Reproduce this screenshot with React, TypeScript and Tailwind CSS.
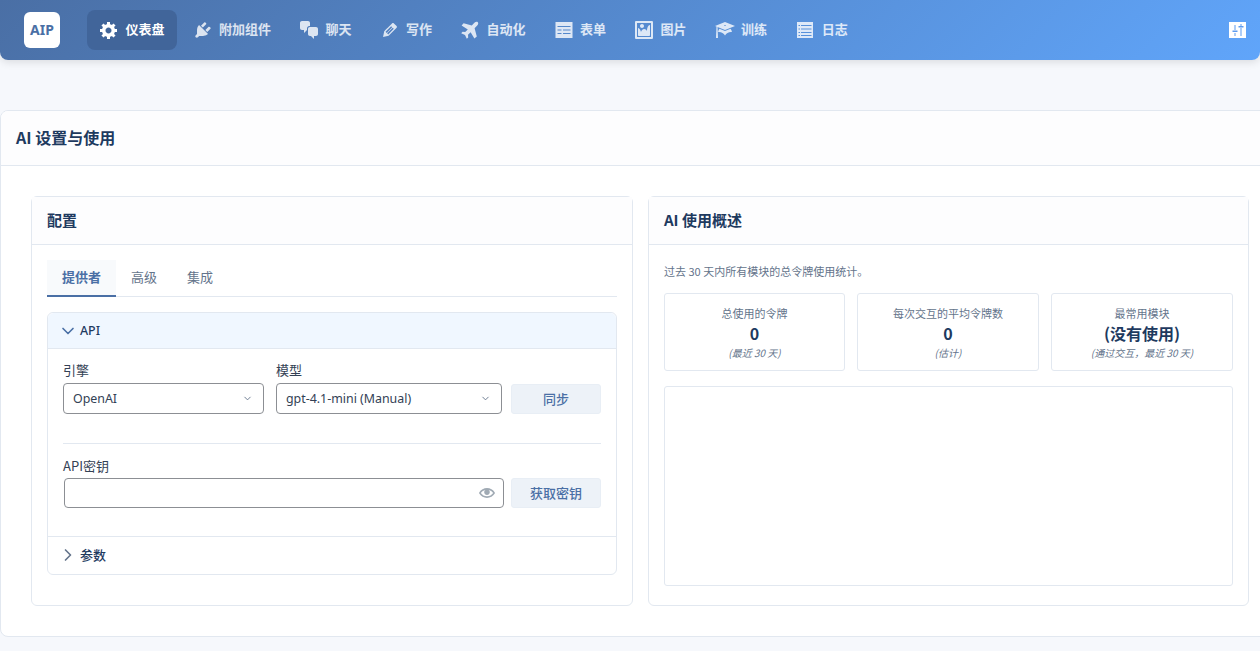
import React from 'react';
import { ChevronDown, ChevronRight } from 'lucide-react';

type IconProps = { className?: string };

const Dash = ({ d, className }: IconProps & { d: string }) => (
  <svg viewBox="0 0 20 20" className={className} fill="currentColor">
    <path d={d} />
  </svg>
);

const CogIcon = (p: IconProps) => (
  <Dash {...p} d="M18 12h-2.180c-.17.7-.44 1.350-.81 1.930l1.540 1.540-2.100 2.100-1.540-1.540c-.58.36-1.230.63-1.910.79V19H8v-2.180c-.68-.16-1.330-.43-1.910-.79l-1.540 1.540-2.120-2.120 1.540-1.540c-.36-.58-.63-1.230-.79-1.910H1V9.030h2.170c.16-.7.44-1.350.8-1.940L2.430 5.550l2.100-2.100 1.540 1.540c.58-.37 1.240-.64 1.930-.81V2h3v2.180c.68.16 1.330.43 1.910.79l1.540-1.540 2.120 2.120-1.540 1.540c.36.59.64 1.240.8 1.940H18V12zm-8.500 1.500c1.660 0 3-1.340 3-3s-1.340-3-3-3-3 1.340-3 3 1.340 3 3 3z" />
);
const PlugIcon = (p: IconProps) => (
  <Dash {...p} d="M13.110 4.360L9.870 7.600 8 5.730l3.240-3.240c.35-.34 1.050-.2 1.560.32.52.51.66 1.210.31 1.550zm-8 1.770l.91-1.120 9.010 9.010-1.190.84c-.71.71-2.630 1.160-3.820 1.160H6.140L4.900 17.260c-.59.59-1.540.59-2.120 0-.59-.58-.59-1.530 0-2.120l1.240-1.240v-3.880c0-1.130.4-3.190 1.090-3.890zm7.260 3.970l3.240-3.240c.34-.35 1.040-.21 1.550.31.52.51.66 1.210.31 1.550l-3.240 3.250z" />
);
const ChatIcon = (p: IconProps) => (
  <Dash {...p} d="M11 6h-.82C9.070 6 8 7.200 8 8.160V10l-3 3v-3H3c-1.100 0-2-.9-2-2V3c0-1.100.9-2 2-2h6c1.100 0 2 .9 2 2v3zm0 1h6c1.100 0 2 .9 2 2v5c0 1.100-.9 2-2 2h-2v3l-3-3h-1c-1.100 0-2-.9-2-2V9c0-1.100.9-2 2-2z" />
);
const EditIcon = (p: IconProps) => (
  <Dash {...p} d="M13.890 3.390l2.710 2.720c.46.46.42 1.240.03 1.640l-8.010 8.020-5.560 1.160 1.160-5.580s7.600-7.630 7.990-8.030c.39-.39 1.220-.39 1.680.07zm-2.730 2.790l-5.590 5.610 1.110 1.110 5.540-5.650zm-2.970 8.230l5.580-5.600-1.070-1.080-5.590 5.600z" />
);
const PlaneIcon = (p: IconProps) => (
  <Dash {...p} d="M17.800 2.200c.8.8.4 2.400-.6 3.400L14.600 8.200 16.800 16.400 14.400 18.400 10.600 12.200 8 14.800 8.200 17.400 6.800 18.800 5 15 1.200 13.200 2.600 11.800 5.200 12 7.800 9.400 1.600 5.600 3.600 3.200 11.800 5.400 14.400 2.800c1-1 2.600-1.400 3.400-.6z" />
);
const FormIcon = (p: IconProps) => (
  <Dash {...p} d="M1.500 2h17v16h-17zM3.500 6v1h13V6zM3.500 9.500v1h4v-1zM9 9.500v1h7.500v-1zM3.500 13v1h4v-1zM9 13v1h7.500v-1z" />
);
const ImageIcon = (p: IconProps) => (
  <Dash {...p} d="M2.250 1h15.500c.69 0 1.250.56 1.250 1.250v15.500c0 .69-.56 1.250-1.250 1.250H2.250C1.560 19 1 18.440 1 17.750V2.250C1 1.560 1.560 1 2.250 1zM17 17V3H3v14h14zM10 6c0-1.100-.9-2-2-2s-2 .9-2 2 .9 2 2 2 2-.9 2-2zm3 5s0-6 3-6v10c0 .55-.45 1-1 1H5c-.55 0-1-.45-1-1V8c2 0 3 4 3 4s1-3 3-3 3 2 3 2z" />
);
const LearnIcon = (p: IconProps) => (
  <Dash {...p} d="M10 10L2.540 7.020 3 18H1l.48-11.410L0 6l10-4 10 4zm0-5c-.55 0-1 .22-1 .5s.45.5 1 .5 1-.22 1-.5-.45-.5-1-.5zm0 6l5.570-2.230c.71.94 1.200 2.070 1.360 3.300-.3-.04-.61-.07-.93-.07-2.550 0-4.780 1.370-6 3.410C8.780 13.370 6.550 12 4 12c-.32 0-.63.03-.93.07.16-1.230.65-2.360 1.360-3.300z" />
);
const LogIcon = (p: IconProps) => (
  <Dash {...p} d="M2 2h16v16H2zM3.500 5v1h1.500V5zM6 5v1h10.500V5zM3.500 8.500v1h1.500v-1zM6 8.500v1h10.500v-1zM3.500 12v1h1.500v-1zM6 12v1h10.500v-1zM3.500 15v1h1.500v-1zM6 15v1h10.500v-1z" />
);
const EyeIcon = (p: IconProps) => (
  <Dash {...p} d="M19.700 9.400C17.700 6 14 3.900 10 3.900S2.300 6 .3 9.400L0 10l.3.6c2 3.400 5.700 5.500 9.700 5.500s7.700-2.100 9.700-5.500l.3-.6-.3-.6zM10 14.100c-3.100 0-6-1.600-7.700-4.100C3.600 8 5.700 6.600 8 6.100c-.9.6-1.500 1.700-1.500 2.900 0 1.900 1.600 3.500 3.500 3.500s3.500-1.600 3.500-3.500c0-1.200-.6-2.300-1.500-2.900 2.300.5 4.400 1.900 5.700 3.900-1.700 2.500-4.600 4.100-7.700 4.100z" />
);

const navItems = [
  { label: '附加组件', icon: PlugIcon },
  { label: '聊天', icon: ChatIcon },
  { label: '写作', icon: EditIcon },
  { label: '自动化', icon: PlaneIcon },
  { label: '表单', icon: FormIcon },
  { label: '图片', icon: ImageIcon },
  { label: '训练', icon: LearnIcon },
  { label: '日志', icon: LogIcon },
];

const stats = [
  { title: '总使用的令牌', value: '0', note: '(最近 30 天)' },
  { title: '每次交互的平均令牌数', value: '0', note: '(估计)' },
  { title: '最常用模块', value: '(没有使用)', note: '(通过交互\uFF0C最近 30 天)' },
];

const App = () => {
  return (
    <div className="h-[651px] overflow-hidden bg-[#f6f8fc] font-['Noto_Sans_CJK_SC',sans-serif] text-[#1e3a5f]">
      {/* Header */}
      <header className="flex h-[60px] items-center rounded-b-lg bg-[linear-gradient(135deg,#4a6fa5,#60a5fa)] pl-6 pr-[14px] shadow-[0_2px_8px_rgba(0,0,0,0.12)]">
        <div className="flex h-9 w-9 items-center justify-center rounded-md bg-white font-['Noto_Sans',sans-serif] text-sm font-bold text-[#4a6fa5]">AIP</div>
        <nav className="ml-[27px] flex flex-1 items-center gap-1">
          <div className="flex h-10 items-center gap-[6.5px] rounded-lg bg-[#41659a] px-3 text-[13px] font-bold text-white">
            <CogIcon className="h-5 w-5" />
            <span className="pb-[2px]">仪表盘</span>
          </div>
          {navItems.map((item) => {
            const Icon = item.icon;
            return (
              <div key={item.label} className="flex h-10 items-center gap-[6.5px] px-3 text-[13px] font-bold text-white/80">
                <Icon className="h-5 w-5" />
                <span className="pb-[2px]">{item.label}</span>
              </div>
            );
          })}
        </nav>
        <div className="flex h-4 w-[17px] items-center justify-center bg-white">
          <svg viewBox="0 0 16 16" className="h-4 w-4 text-[#5d9bf0]" fill="currentColor">
            <path d="M4.500 3h1v5h-1zM4.500 11h1v3h-1zM2.500 8.500h5V10h-5zM10.500 2h1v2.500h-1zM10.500 6h1v8h-1zM8.500 4h5v1.500h-5z" />
          </svg>
        </div>
      </header>

      {/* Main card */}
      <main className="mt-[50px] h-[527px] w-[1280px] overflow-hidden rounded-lg border border-[#e2e8f0] bg-white">
        <div className="flex h-[55px] items-center border-b border-[#e2e8f0] bg-[#fdfdfe] pb-[2px] pl-[15px]">
          <h1 className="text-base font-semibold">AI 设置与使用</h1>
        </div>
        <div className="flex gap-[15px] pl-[30px] pt-[30px]">
          {/* Config card */}
          <section className="h-[410px] w-[602px] shrink-0 rounded-md border border-[#e2e8f0] bg-white">
            <div className="flex h-[48px] items-center border-b border-[#e2e8f0] bg-[#fdfdfe] px-[15px]">
              <h2 className="text-[15px] font-semibold">配置</h2>
            </div>
            <div className="px-[15px] pt-[15px]">
              <div className="flex h-[37px] border-b border-[#e2e8f0] text-[13px] text-[#64748b]">
                <div className="flex h-[37px] w-[69px] items-center justify-center border-b-2 border-[#4a6fa5] bg-[#f8fafc] pb-[2px] font-semibold text-[#4a6fa5]">提供者</div>
                <div className="flex h-[36px] w-[56px] items-center justify-center pb-[2px]">高级</div>
                <div className="flex h-[36px] w-[56px] items-center justify-center pb-[2px]">集成</div>
              </div>
              <div className="mt-[15px] h-[263px] rounded-md border border-[#e2e8f0]">
                <div className="flex h-[36px] items-center gap-[2px] rounded-t-md border-b border-[#e2e8f0] bg-[#f0f7ff] pl-[10px] font-['Noto_Sans',sans-serif] text-[12.4px] font-medium">
                  <ChevronDown className="h-5 w-5 text-[#4a6fa5]" />
                  <span className="pt-[2px]">API</span>
                </div>
                <div className="px-[15px] pt-[11px]">
                  <div className="flex items-end gap-3">
                    <div className="w-[201px]">
                      <div className="mb-[3px] text-[13px] leading-[20px] text-[#334155]">引擎</div>
                      <div className="flex h-[31px] items-center justify-between rounded-[4px] border border-[#8c8f94] pl-[9px] pr-[10px] font-['Noto_Sans',sans-serif] text-[12.4px] text-[#334155]">
                        <span className="pt-[2px]">OpenAI</span>
                        <ChevronDown className="h-[11px] w-[11px] text-[#64748b]" />
                      </div>
                    </div>
                    <div className="w-[226px]">
                      <div className="mb-[3px] text-[13px] leading-[20px] text-[#334155]">模型</div>
                      <div className="flex h-[31px] items-center justify-between rounded-[4px] border border-[#8c8f94] pl-[9px] pr-[10px] font-['Noto_Sans',sans-serif] text-[12.4px] text-[#334155]">
                        <span className="pt-[2px]">gpt-4.1-mini (Manual)</span>
                        <ChevronDown className="h-[11px] w-[11px] text-[#64748b]" />
                      </div>
                    </div>
                    <div className="ml-[-3px] flex h-[30px] w-[90px] items-center justify-center rounded-[3px] border border-[#e8eef5] bg-[#edf2f8] text-[13px] font-medium text-[#4a6fa5]">同步</div>
                  </div>
                  <div className="mt-[29px] border-t border-[#e2e8f0]" />
                  <div className="mt-[12px] text-[13px] leading-[20px] text-[#334155]">API密钥</div>
                  <div className="mt-[2px] flex items-center gap-[7px]">
                    <div className="ml-[1px] flex h-[30px] w-[440px] items-center justify-end rounded-[4px] border border-[#8c8f94] pr-[8px]">
                      <EyeIcon className="h-4 w-4 text-[#a0aab4]" />
                    </div>
                    <div className="flex h-[30px] w-[90px] items-center justify-center rounded-[3px] border border-[#e8eef5] bg-[#edf2f8] text-[13px] font-medium text-[#4a6fa5]">获取密钥</div>
                  </div>
                </div>
                <div className="mt-[28px] flex h-[37px] items-center gap-[2px] border-t border-[#e2e8f0] pl-[10px] text-[13px] font-medium">
                  <ChevronRight className="h-5 w-5 text-[#64748b]" />
                  参数
                </div>
              </div>
            </div>
          </section>

          {/* Usage card */}
          <section className="h-[410px] w-[601px] shrink-0 rounded-md border border-[#e2e8f0] bg-white">
            <div className="flex h-[48px] items-center border-b border-[#e2e8f0] bg-[#fdfdfe] px-[15px]">
              <h2 className="text-[15px] font-semibold">AI 使用概述</h2>
            </div>
            <div className="px-[15px] pt-[18px]">
              <p className="text-[11px] leading-[16px] text-[#64748b]">过去 30 天内所有模块的总令牌使用统计。</p>
              <div className="mt-[14px] grid grid-cols-[181px_182px_182px] gap-3">
                {stats.map((s) => (
                  <div key={s.title} className="flex h-[78px] flex-col items-center justify-center rounded-[3px] border border-[#e2e8f0] text-center">
                    <div className="text-[11px] leading-[16px] text-[#64748b]">{s.title}</div>
                    <div className="text-base font-semibold leading-[24px]">{s.value}</div>
                    <div className="text-[10px] italic leading-[15px] text-[#64748b]">{s.note}</div>
                  </div>
                ))}
              </div>
              <div className="mt-[15px] h-[200px] rounded-[3px] border border-[#e2e8f0]" />
            </div>
          </section>
        </div>
      </main>
    </div>
  );
};

export default App;
